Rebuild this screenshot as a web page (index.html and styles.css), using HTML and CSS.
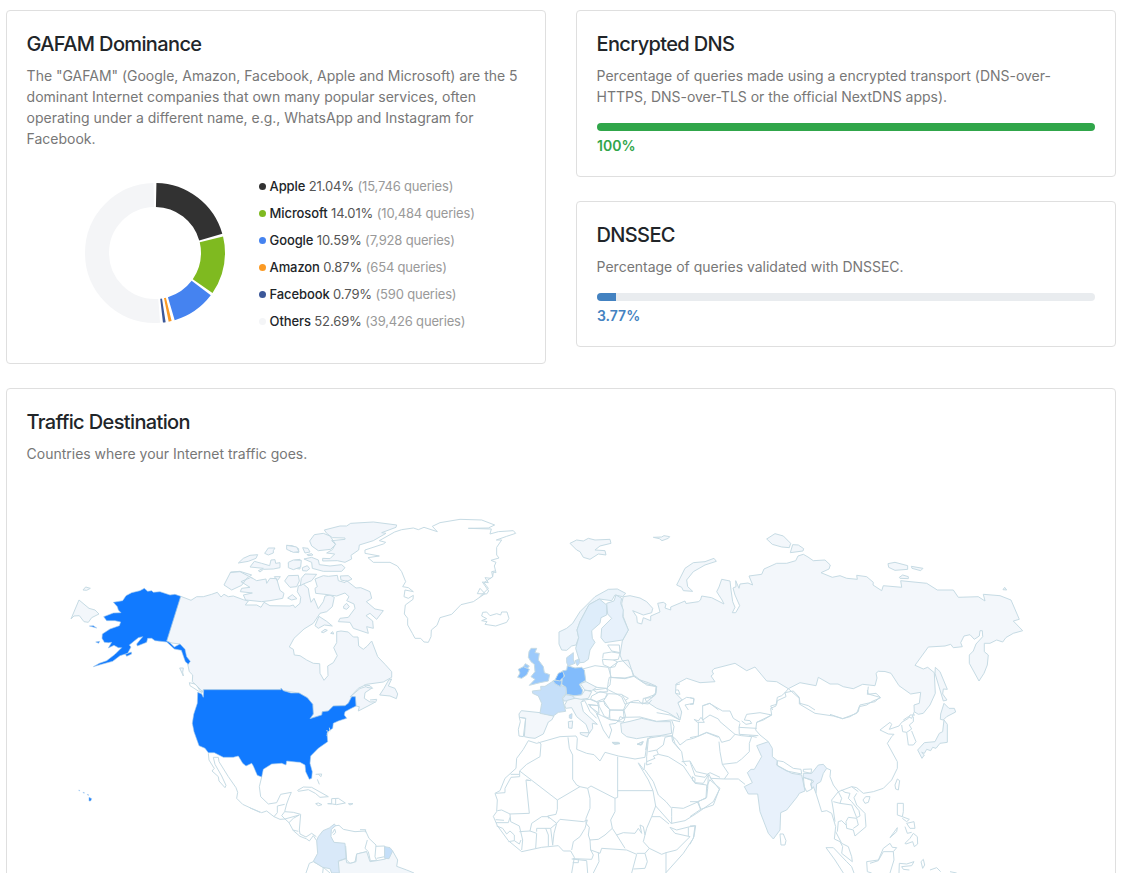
FILE: index.html
```html
<!DOCTYPE html>
<html lang="en">
<head>
<meta charset="utf-8">
<title>Analytics</title>
<link rel="stylesheet" href="styles.css">
</head>
<body>
<main class="page">
<div class="row">
<section class="card gafam">
<h2>GAFAM Dominance</h2>
<p>The "GAFAM" (Google, Amazon, Facebook, Apple and Microsoft) are the 5<br>dominant Internet companies that own many popular services, often<br>operating under a different name, e.g., WhatsApp and Instagram for<br>Facebook.</p>
<div class="chart">
<svg class="donut" width="140" height="140" viewBox="-70 -70 140 140">
<g transform="rotate(-90)">
<circle r="58" pathLength="360" stroke="#323232" stroke-dasharray="72.8 287.2" stroke-dashoffset="-1.2"/>
<circle r="58" pathLength="360" stroke="#7fba20" stroke-dasharray="48.4 311.6" stroke-dashoffset="-76.4"/>
<circle r="58" pathLength="360" stroke="#4583f0" stroke-dasharray="36.4 323.6" stroke-dashoffset="-127.2"/>
<circle r="58" pathLength="360" stroke="#fb9a24" stroke-dasharray="2.5 357.5" stroke-dashoffset="-166.2"/>
<circle r="58" pathLength="360" stroke="#3c5899" stroke-dasharray="2.2 357.8" stroke-dashoffset="-171.2"/>
<circle r="58" pathLength="360" stroke="#f4f5f7" stroke-dasharray="183 177" stroke-dashoffset="-175.8"/>
</g>
</svg>
<ul class="legend">
<li><i class="dot apple"></i><b>Apple</b> 21.04% <span>(15,746 queries)</span></li>
<li><i class="dot microsoft"></i><b>Microsoft</b> 14.01% <span>(10,484 queries)</span></li>
<li><i class="dot google"></i><b>Google</b> 10.59% <span>(7,928 queries)</span></li>
<li><i class="dot amazon"></i><b>Amazon</b> 0.87% <span>(654 queries)</span></li>
<li><i class="dot facebook"></i><b>Facebook</b> 0.79% <span>(590 queries)</span></li>
<li><i class="dot others"></i><b>Others</b> 52.69% <span>(39,426 queries)</span></li>
</ul>
</div>
</section>
<div class="stack">
<section class="card">
<h2>Encrypted DNS</h2>
<p>Percentage of queries made using a encrypted transport (DNS-over-<br>HTTPS, DNS-over-TLS or the official NextDNS apps).</p>
<div class="bar"><div class="fill green" style="width:100%"></div></div>
<div class="value green-text">100%</div>
</section>
<section class="card">
<h2>DNSSEC</h2>
<p>Percentage of queries validated with DNSSEC.</p>
<div class="bar"><div class="fill blue" style="width:3.77%"></div></div>
<div class="value blue-text">3.77%</div>
</section>
</div>
</div>
<section class="card traffic">
<h2>Traffic Destination</h2>
<p>Countries where your Internet traffic goes.</p>
<svg class="map" width="1068" height="393" viewBox="27 480 1068 393">
<!-- Russia, Canada, contiguous United States -->
<path class="ru" d="M623.3 596.7 630 595.7 640 598 646.7 601.7 652.7 608.3 651.7 612.7 643.3 615 632.7 610.7 636.7 616.7 637.3 622.7 641.7 624 643.3 617.7 650.7 620.7 650.7 616 660 612 657.7 603.3 663.3 602.3 666 604 665 608 670.7 610 670.7 607 685 601 686 603.500 698.300 601.700 700.500 600 701.700 596 711.700 597.700 724 604 722 600 716.700 591.700 719 587 721.700 579.300 730 581 731 590 732.700 601.700 735 607.300 732.300 612.700 735.700 612.700 739.700 605.700 735 595 733 588 736 586.700 735.700 580.700 739 588.300 740 584 748 583 752.700 585 749 576 761.700 574.300 764 569 776.700 563.300 786.700 563.300 795.700 560.700 798 556 803.300 554.300 808 557 813.300 560.700 825 560 830.300 565 829 569 821 572.700 832.300 577.300 840 575.700 846.700 578.300 857.300 579.300 856.700 575.300 866.700 576.700 873.300 582.300 873 585 881.700 590.700 883.300 585.700 901.700 587.300 900.700 580.700 926.700 583.300 937.300 590 953.300 590 958.300 597.300 978.300 596.700 985 601 983.300 594.300 1000 595.700 1011 600 1019.300 619.300 1013.300 621 1022.700 630.700 1013.300 633.300 1006 637.500 1002.700 642 996.700 640 990 643.300 984.300 643.300 984.300 651.700 988.300 655 987.300 665 984 673.300 979 681 969.300 663.300 969.300 655 973.300 651 976 644 982.700 636.700 982.300 630.700 980 630.700 979.300 636 974.300 639.300 970 634.700 964 636 960.700 642.700 962.300 646.700 953.300 647.700 950.700 644.300 945 646 928.300 647 915 665.300 923.300 669 927.700 667.300 934.300 672.700 935.300 693.300 930 705 923.300 713.300 918.300 714.300 914.300 711.700 914 705 919.300 703.300 920.700 692.300 910.700 694 899 685.700 891 673.300 885 671.500 878.300 671.300 876 673.300 877 678 875 685.700 862.700 684.300 853.300 688.700 843.300 686.700 838 684 830 684 818.300 677.300 816 685.700 800 682.700 788.300 688.700 776.700 681.700 766.700 681 755 667 746.700 670.700 735 663.300 714 668.700 712 671 713.500 674 711 676 715 681.700 700 682.700 686.700 678.300 676 684 675.500 693 682.300 700 678 703 681.700 712 680 720 668 712.500 656.700 708.300 646.700 701.700 655.300 695 656.700 686.700 643.300 682.700 634.300 676.700 631.700 670 622 660 620 655 622.300 641 628.300 630 623.300 616.700 621.700 603.300Z"/>
<path class="ca" d="M180.700 596.300 191 600.300 196.700 596.700 203.300 596.700 211.700 594.300 217.300 592.300 221 597 224 594.300 228.300 596.700 233.300 596 243.300 599.700 248.300 601 245.300 605 256.700 605 261 607.300 264 602.300 270 605.700 290 606 293.300 605 295 607.700 300 603.300 300.700 597.300 297.300 591.700 298.300 586 303.300 584 308.300 588.300 309.300 595 311 602.300 314 598.300 318.300 608.700 323.300 601.700 325 596 330 595 334.300 597.300 332.300 606.700 326.700 611.700 320 613.300 313.300 623.300 304 629 294 638.300 289.300 647 293.300 649.300 294.300 655 300 655.700 306.700 660 313.300 663.300 319.700 663.700 320 673.300 324 680.300 328 675.700 327.700 666 333.300 662.700 337.300 655.700 333.700 647.700 336.700 642.700 336.700 631.700 341 631 348.300 632 353.300 637 358 637 358.700 646 363.300 649.300 367.300 646 371.700 641 377.700 656.700 385 664.300 391.700 671.700 391.700 677.300 383.300 682 366.700 684.300 358.300 688.300 350 697 360 688.500 368 686 372 688 365 692.700 364.300 698.300 370 702 376 701.700 368 706 358.300 711 359.300 706.700 356 706 355.300 696.700 351.700 696.700 348.300 703.300 345 705.700 333.300 706 328.300 711 322.300 711.700 321.700 715 310 718.700 313.300 714 312.700 704.300 307.300 697.700 299 693 283.300 690.700 281 688.300 281 689.700 203.300 689.700 201.700 693.300 197 686 192.300 681.700 192.700 675 189.300 671.700 187.700 664 184 650 180 644 172 643 166.700 641Z"/>
<path class="us" d="M203.700 689.700 281 689.700 281 688.300 283.300 690.700 291 693 299 693 307.300 697.700 312.700 704.300 313.300 714 310 718.700 321.700 715 322.300 711.700 328.300 711 333.300 706 345 705.700 348.300 703.300 351.700 696.700 355.300 696.700 356 706 350 709 345 711.700 344.300 715 346.700 718.300 338.300 721 333.300 723.300 332.700 728.300 329.300 730.700 327 733 327.700 741.700 318.300 748.300 310.700 756 310 763.300 312.300 771.700 311.700 778.300 309.300 779.300 305.700 771.700 305 765 300 762.300 296 762 286.700 761 286 765 281.700 763.300 271.700 764 263.300 769.300 261.700 777 257.300 775.300 253.300 766 251.700 763.300 246 766 242.700 763.300 238.300 756 233.300 757.300 223.300 757.300 214.300 752.700 208.300 752.700 205 748.300 199 745.700 194 731.700 192.300 723.300 193.700 714.300 197.300 703.300 197.700 692.300 201.700 694 203.300 697.300Z"/>
<!-- Alaska, Chukotka tip, western Arctic islands -->
<g transform="translate(60 500) scale(.33333)">
<path class="us" d="M362 289 345 283 330 285 300 275 280 277 275 272 263 274 253 265 240 272 215 278 198 287 188 302 160 307 172 320 175 330 183 338 160 339 131 350 140 362 165 362 182 366 178 377 150 387 127 402 126 415 133 427 145 428 155 427 145 444 162 436 175 443 185 443 165 463 140 482 118 490 100 500 125 493 158 484 180 467 203 460 213 441 208 435 235 413 248 410 230 432 232 438 260 427 263 415 275 415 285 422 320 426 343 447 364 451 376 485 385 493 391 484 380 470 375 448 360 432 343 441 330 428 320 423ZM196 463 214 456 215 462 200 469ZM88 378 100 377 110 384ZM107 426 119 424 116 430Z"/>
<path class="ru" d="M33 357 57 300 87 325 105 330 117 342 95 353 85 367 72 365 58 347 42 348ZM69 270 77 261 91 265 80 271Z"/>
<path class="ca" d="M535 189 550 175 570 166 593 164 588 175 565 184ZM614 160 625 144 645 144 640 152 640 159 625 165ZM680 136 697 137 716 146 716 158 690 153ZM570 201 583 184 605 190 629 197 633 180 645 179 647 190 660 188 660 203 640 207 610 208 600 216 595 212 610 205ZM685 190 705 180 720 178 720 207 690 203ZM512 216 540 214 575 225 560 235 545 256 515 270 492 255ZM543 245 573 232 590 242 618 237 620 250 630 235 650 236 660 271 672 280 668 295 630 302 605 305 557 300 550 285 577 279 541 275 545 265 570 262ZM643 230 661 230 652 242ZM359 504 370 504 368 517 370 528Z"/>
</g>
<!-- Canadian Arctic Archipelago -->
<g transform="translate(230 510) scale(.33333)">
<path class="ca" d="M283 60 330 48 350 48 362 40 430 36 500 45 498 52 455 68 468 70 430 92 388 105 386 120 363 136 365 147 345 157 322 152 278 153 278 145 300 146 314 132 290 129 307 119 316 103 305 92 345 88 345 84 307 83 290 70ZM239 93 253 74 280 70 300 78 317 103 302 118 265 122 245 108ZM170 106 200 111 207 125 190 127 170 118ZM218 113 234 115 240 126 225 129ZM231 134 245 131 249 135 234 137ZM175 157 190 150 214 151 212 171 190 179 175 173ZM222 147 245 142 265 150 268 164 300 168 335 164 345 173 335 184 280 184 247 175 245 157ZM217 173 232 167 239 176 230 183 218 182ZM164 213 175 197 205 196 208 213 200 230 180 232ZM214 205 225 192 260 193 245 212 220 222 211 227ZM255 207 280 197 295 199 322 196 325 212 345 218 350 212 378 234 392 233 420 245 425 265 409 275 435 297 460 302 440 328 420 310 408 317 428 333 430 355 410 350 415 370 370 355 360 337 325 335 330 325 355 322 375 295 372 282 350 272 357 260 345 249 320 258 285 253 257 250 255 235 262 230ZM331 198 355 197 366 207 352 214 333 210ZM341 288 350 280 358 290 350 298 341 295ZM173 264 187 254 201 266 185 270ZM267 319 290 334 307 348 283 345 265 355 255 347ZM274 366 285 358 292 361 280 368ZM302 370 308 365 311 372ZM0 188 30 185 68 205"/>
</g>
<!-- Greenland, Iceland -->
<g transform="translate(350 510) scale(.33333)">
<path d="M134 66 155 59 190 54 205 59 222 52 262 65 247 49 270 38 330 28 395 30 434 45 415 54 355 55 424 57 420 72 445 65 490 62 497 70 470 79 439 90 455 90 440 112 440 135 447 144 423 151 438 157 433 168 438 188 430 186 428 200 422 205 405 203 415 218 397 216 416 243 410 252 382 251 390 235 405 251 370 275 333 284 305 313 270 323 261 346 244 360 243 380 235 397 222 396 212 385 195 385 187 370 173 345 173 325 163 312 166 285 189 268 190 256 175 265 162 260 165 240 190 245 175 233 158 230 167 215 155 185 142 168 120 157 70 157 54 143 88 138 45 130 45 120 100 102 107 97 88 92 134 66M395 318 398 307 410 306 420 317 440 311 452 315 455 306 471 306 477 325 470 337 437 348 405 343 411 335 395 332 410 326Z"/>
</g>
<!-- Hawaii, Vancouver, Baja California -->
<g transform="translate(60 670) scale(.33333)">
<path class="us" d="M87 382 95 386 92 393 87 393ZM56 361 59 361 58 363ZM69 367 73 368 72 370ZM82 373 86 375 84 376Z"/>
<path d="M388 38 405 42 428 65 418 65 390 47ZM445 250 447 270 460 291 463 295 456 303 475 320 477 333 495 353 498 346 485 318 465 283 460 262 475 262 477 275 505 320 528 353 533 367 530 385 548 403 600 427"/>
</g>
<!-- Atlantic Canada, Central America, northern South America -->
<g transform="translate(250 670) scale(.33333)">
<path class="ca" d="M389 75 402 55 416 30 425 27 415 48 435 55 443 72 439 86 420 78ZM343 45 360 47 368 55 350 52ZM378 95 380 88 360 90"/>
<path d="M35 321 28 350 32 380 55 402 80 398 92 373 124 367 117 383 110 402 104 425 130 427 152 433 148 480 150 492 168 501 185 490 199 500M0 414 35 428 50 423 72 440 90 448 105 447 117 458 130 482 150 499 170 507 178 513 190 497 200 512M72 440 82 428 82 408 104 403M104 425 95 437 105 447 148 435M117 458 130 445 148 435M128 480 145 484M143 361 160 351 185 352 235 380 210 382 196 370 175 359 145 364ZM197 401 205 399 216 404 205 407ZM233 401 245 401 245 386 265 385 286 399 260 404 247 402ZM257 386 257 405M295 401 309 401 300 405ZM197 313 215 312 213 320 205 313M202 328 208 343M229 182 235 184 231 198M238 173 240 184M250 468 267 466 280 478 315 485 347 483 357 505 378 525 375 560 380 572 361 572 355 545 345 535 352 510M247 490 254 477 257 487 250 495M330 479 347 479 346 487M378 529 404 528 404 560 380 565M287 528 290 570 300 580 315 576 320 552 350 545M288 565 265 575M168 609 178 580 190 575 220 592 218 609M220 592 240 609"/>
<path class="co" d="M253 462 257 467 244 478 243 500 252 517 285 520 288 565 265 573 270 609 245 609 240 596 218 592 190 574 203 550 200 512 205 500 219 482 238 474Z"/>
<path class="br" d="M268 609 265 574 288 566 290 578 302 580 318 575 320 552 350 545 360 575 380 572 407 567 428 543 443 570 440 589 470 600 492 609"/>
<path class="gf" d="M404 530 420 533 428 543 417 566 404 565Z"/>
</g>
<!-- Europe -->
<g transform="translate(480 570) scale(.33333)">
<path class="no" d="M237 186 260 175 278 160 300 125 345 80 385 58 412 57 437 70 428 80 405 75 395 92 358 87 327 104 300 155 291 180 296 203 288 225 275 228 260 241 245 240 237 222Z"/>
<path class="se" d="M291 180 300 155 327 104 358 87 380 105 380 135 363 143 360 160 335 182 337 205 345 217 330 240 325 268 312 277 300 278 287 235 296 203Z"/>
<path class="fi" d="M380 100 402 93 408 75 425 85 422 100 430 120 428 140 445 180 428 210 375 218 363 203 365 175 395 145 383 132Z"/>
<path class="gb" d="M147 245 153 235 170 235 165 248 178 250 175 270 190 290 193 308 209 314 205 333 180 338 148 346 165 328 153 320 165 305 163 283 153 275 145 262ZM130 290 136 281 148 288 140 298Z"/>
<path class="ie" d="M115 298 130 290 148 298 140 315 125 325 113 322 120 309Z"/>
<path class="dk" d="M260 263 280 248 280 270 285 280 265 288 260 278ZM285 272 298 267 298 280 292 287Z"/>
<path class="es" d="M117 432 124 422 180 428 222 438 215 450 205 456 190 492 165 505 147 503 133 500 137 445 118 442Z"/>
<path d="M118 442 137 445 130 500 117 498 115 478 121 455ZM305 298 345 287 385 292 393 320 390 345 380 355 350 352 318 340ZM390 293 415 275 445 270 455 300 460 318 435 324 392 322ZM388 322 435 326 465 318 500 345 530 350 527 373 495 385 500 397 487 402 475 391 460 393 435 403 425 380 400 367 382 358 385 335ZM367 268 400 270 412 275 405 290 390 293 370 284ZM383 225 418 225 420 248 395 243ZM368 265 370 250 395 246 420 250 415 268 400 270M335 378 360 365 382 370 375 385 350 395 332 387ZM371 392 385 371 425 373 440 397 430 421 390 420 375 405ZM388 420 432 420 437 440 417 452 390 449ZM355 396 372 393 390 420 387 445 373 439 358 410ZM332 405 355 407 357 430 330 410ZM350 430 365 437 387 448 415 452 408 460 388 463 395 480 387 505 370 480 362 460ZM310 390 330 388 352 397 355 407 325 403 350 430 353 440M340 360 380 355 383 365 350 367ZM303 396 314 392 320 403 330 425 350 445M432 421 450 397 495 400M430 421 432 442 480 441 530 454 575 450M420 440 435 445 430 456 415 455ZM425 374 445 385 435 392M530 428 570 435 600 450M398 518 420 520 405 523ZM472 523 488 515 483 525ZM503 505 545 498 575 498M503 505 497 540M575 450 582 470 577 498 585 520 600 540M577 450 600 455M590 428 598 445M587 345 600 342M587 370 600 373 595 360 587 360M0 80 25 55 12 38 38 20 35 5 45 3"/>
<path class="fr" d="M157 363 183 360 182 349 195 349 220 333 240 345 260 353 258 372 247 382 252 405 257 424 235 427 220 438 180 430 185 400 175 378 158 370ZM268 435 276 431 275 446 268 444Z"/>
<path class="be" d="M219 332 240 327 246 335 241 350 225 341Z"/>
<path class="nl" d="M225 330 235 310 252 302 252 323 243 328 241 333Z"/>
<path class="de" d="M247 303 260 300 262 287 285 294 305 292 313 300 317 331 298 343 308 361 305 375 283 377 260 373 258 352 245 343 247 325 254 318Z"/>
<path class="ch" d="M248 386 258 374 280 378 285 386 265 393 252 393Z"/>
<path class="it" d="M254 405 262 391 292 383 312 388 303 397 310 425 352 463 337 460 338 475 328 490 318 463 290 440 275 413 257 415ZM300 488 328 488 322 501 302 493ZM265 455 278 453 276 475 266 474Z"/>
<path class="at" d="M278 378 305 375 315 360 335 365 325 385 303 388 283 384ZM301 341 318 335 350 352 335 362 315 361Z"/>
<path class="tr" d="M422 460 450 454 485 445 530 455 572 455 575 490 540 497 505 500 470 506 440 500 425 488Z"/>
</g>
<!-- Africa and Arabia -->
<g transform="translate(480 720) scale(.33333)">
<path d="M145 62 130 88 110 115 108 145 75 175 60 212 45 220 52 240 50 275 40 289 52 317 85 362 125 395 185 382 235 377 250 393 272 393 283 412 275 459M145 62 170 70 240 50 288 48 292 55 290 88 320 100 342 104 360 123 375 97 415 108 465 117 495 112 503 58 515 50M119 153 140 133 180 110 183 72 176 66M119 153 119 170 93 172 75 205 75 218 47 220M92 163 118 163M119 153 232 240 300 200 323 205 333 198 405 235 413 232 413 110M413 212 519 212M140 180 152 182 138 180 148 280 90 282 65 270 52 272M90 282 92 305 118 318 128 360 125 390M90 292 85 308 48 308M47 299 72 301M50 318 68 325 80 342 90 333 103 345 103 362 85 365M103 362 118 372 123 360M118 335 150 333 170 340 167 385M150 333 155 310 185 290 205 290 230 310 212 325 170 325 170 335M197 325 205 345 205 378M212 325 218 375M230 310 240 298 310 305 322 300 315 325 300 350 280 365 275 390M218 376 222 340 230 310M232 240 232 268 228 283 203 288 207 296M264 52 268 85 278 105 278 178 290 195 300 200M323 205 330 235 330 265 318 295 318 310 328 322 325 345 330 360 332 390 340 405 335 418 278 416M330 360 355 358 375 345 397 325 392 300 405 275 405 235M332 390 360 400 365 385 440 390 470 403 455 459M397 325 410 345 435 385M410 345 430 338 465 340 475 325 485 340 480 315 490 320 495 345 490 365 508 385M519 212 527 258 515 290 500 325 495 345M515 290 540 290 567 312M527 258 575 312M475 130 490 155 505 180 519 212M495 128 492 150 475 128M495 150 520 185 535 225 558 245 575 265 575 290 575 310M575 310 615 302 650 280 700 245 720 205M508 385 545 403 558 398 590 390 630 350 585 340 570 322M570 322 590 330 630 320 645 318 640 355 610 400 558 458M558 398 558 459M508 385 495 400 470 400M495 400 502 425 495 445 460 447M275 417 320 422 323 459M295 417 295 428 278 428M355 398 357 425 340 459M625 322 625 348M535 103 565 110 610 138 645 190 680 195 683 205 680 232 655 245 610 265 575 262M655 245 662 268M500 125 525 115 520 108 535 103 530 90 550 75 555 52M505 95 530 90M505 58 500 110 500 135 515 130M575 47 578 65 605 95 610 125 620 138M605 125 630 123 648 155 683 163 690 158 720 172M637 170 645 175 645 185 638 182ZM645 188 670 190 685 165 683 205M720 205 690 180M396 67 415 67 420 71 402 72ZM472 72 490 65 485 75ZM575 47 590 60 600 75 620 60 640 55 680 38 715 52M555 52 575 47"/>
</g>
<!-- Arctic islands, Central Asia -->
<g transform="translate(640 520) scale(.33333)">
<path class="ru" d="M40 52 65 51 72 47 89 50 85 55 66 62 58 56ZM380 57 405 41 430 48 452 70 448 83 425 81 397 73ZM458 74 475 75 491 86 489 93 451 98ZM110 195 125 165 135 145 160 128 195 125 222 115 229 124 195 135 160 155 140 180 143 200 158 214 130 212 125 202Z"/>
<path d="M0 480 25 488 48 498 47 518 35 533 10 535 8 550 25 552 35 540M113 548 140 532 162 535 160 550 135 555 145 570M187 558 210 550 235 570M445 506 435 518 438 530 412 542 410 553 392 558 398 570M445 506 478 535 480 550 505 557 525 570"/>
</g>
<g transform="translate(570 530) scale(.33333)">
<path class="ru" d="M0 40 20 30 40 33 55 25 75 30 120 28 123 40 90 48 75 60 105 62 108 75 85 72 60 88 40 82 30 65 20 60Z"/>
</g>
<!-- Far East -->
<g transform="translate(830 540) scale(.33333)">
<path class="ru" d="M174 71 195 67 233 77 233 88 195 91 176 82ZM244 79 279 85 272 92 246 85ZM208 112 218 105 235 110 235 116 210 115ZM519 149 524 142 530 150ZM316 382 330 395 352 448 340 447 338 462 351 480 340 483 327 440 315 400Z"/>
<path class="jp" d="M342 490 357 505 373 505 377 516 350 530 340 540 331 538 332 522Z"/>
<path d="M115 440 112 463 138 460 152 473 125 485 110 495 88 500 85 515 60 530 38 536 0 523M253 515 245 535 235 530 220 540"/>
</g>
<!-- South and East Asia -->
<g transform="translate(690 690) scale(.33333)">
<path class="in" d="M200 167 235 155 247 175 247 200 262 212 260 225 305 250 335 255 337 264 345 303 328 310 322 320 290 360 272 368 270 420 250 447 235 430 210 365 203 312 175 312 163 290 187 278 172 248 183 238 193 238 215 200ZM340 250 365 250 385 225 400 223 410 235 400 250 392 275 380 282 378 310 370 290 366 296 363 282 372 274 340 262Z"/>
<path class="jp" d="M762 90 772 103 772 157 750 160 738 175 728 172 722 182 710 178 703 190 695 187 703 195 696 205 683 180 703 158 735 155 748 130 758 125Z"/>
<path d="M262 212 280 215 310 235 333 238 335 252 290 243 262 227ZM340 238 365 237 363 250 340 245ZM340 262 367 270 362 282 366 297 350 305 343 290ZM235 155 210 135 197 120 200 97 245 75 242 55 258 48 262 22 275 17 285 8 310 3 328 22 328 42 375 70 430 78 458 86 500 70 510 45 555 35 570 22 535 12 532 0M200 97 220 90 245 75 210 68 170 73 163 90 180 92 185 100 168 103 155 93M150 100 147 112 200 115M147 112 148 133 205 137M38 90 38 47 58 40 98 63 120 63 130 85 150 97M38 90 60 75 85 87 90 95 135 133M12 88 25 93 33 82 43 97 22 97 12 88M0 23 12 27 10 43 0 43M25 97 25 138 0 143M25 138 50 127 87 140 95 157 120 150 135 133 155 137 185 140 178 160 178 185 155 207 140 218 97 223 90 185 87 155M178 137 200 142M97 223 115 250 103 267 63 265 55 250 45 262 15 257 0 215M103 267 145 267 165 283M410 235 422 240 420 260 430 285 445 305 485 290 500 293 520 310 550 305 580 295 605 270 622 235 622 215 592 160 605 140 612 133 595 132 570 120 600 97 605 103 598 118 627 108 635 97 655 85 660 75 675 75M635 105 638 125 650 127 665 117 658 105 670 95 670 80M650 127 655 165 670 165 678 155 665 123M615 285 622 267 629 272 625 300 617 297ZM519 330 527 320 540 320 535 337 525 340ZM500 310 492 323 500 345 525 370 528 410 495 438 490 420 470 415 468 395 475 382 500 385 505 405 490 415M485 290 505 305M445 305 455 325 450 340 485 345 500 383 510 378 507 362 485 335 475 325 480 310 465 307 455 300M378 310 395 365 410 362 425 370 437 410 433 447 450 455 458 470 455 490 487 515 485 500 475 470 455 460 437 425M445 305 425 330 430 360 435 395M450 340 430 335M468 405 455 392 445 395 442 425M270 432 280 432 288 452 285 465 273 465ZM408 473 430 473 470 515 485 530 492 549M408 473 435 510 460 549M530 515 532 545 545 549M530 515 565 510 580 475 600 460 607 472 620 473 610 485 580 485 565 512 540 520M610 485 612 510 600 549M622 340 640 340 640 365 637 380 622 375ZM637 380 658 388 650 395 637 385M650 400 672 395 675 415 660 415ZM645 410 652 430 665 427M645 460 660 445 670 430 682 440 683 462 673 470 668 455 648 462ZM600 443 622 413 620 425ZM627 549 628 520 650 522 672 515 665 527 635 530 640 538 658 540M693 515 700 508 704 525 698 535ZM720 540 740 533 752 545M780 545 800 549M0 408 17 407 12 440 0 463M0 335 22 335 32 358 70 345 88 298 60 262M22 335 48 325 50 290 60 268M0 380 32 358"/>
</g>
</svg>
</section>
</main>
</body>
</html>
```
FILE: styles.css
```css
* { box-sizing: border-box; }
body {
  margin: 0;
  background: #fff;
  color: #212529;
  font-family: Inter, "Liberation Sans", sans-serif;
  overflow: hidden;
}
.page { width: 1116px; padding: 10px 0 0 6px; }
.row { display: grid; grid-template-columns: 540px 540px; gap: 30px; align-items: start; }
.stack { display: grid; gap: 24px; }
.card {
  border: 1px solid #dfdfdf;
  border-radius: 4px;
  padding: 21px 20px 20px;
  background: #fff;
}
h2 { margin: 0 0 9px -.5px; font-size: 20px; line-height: 24px; font-weight: 500; letter-spacing: -.63px; }
p { margin: 0 0 0 -.4px; font-size: 14px; line-height: 21px; letter-spacing: -.012px; color: #777; white-space: nowrap; }
.gafam { height: 354px; }
.stack .card + .card { padding-bottom: 20px; }
.chart { display: flex; align-items: center; padding: 24px 0 0 58px; }
.donut { flex: none; margin-bottom: 2px; }
.donut circle { fill: none; stroke-width: 24; }
.legend { list-style: none; margin: 0 0 0 34px; padding: 0; font-size: 13px; line-height: 27px; letter-spacing: -.12px; color: #555; }
.legend li { white-space: nowrap; }
.legend b { font-weight: 500; color: #212529; }
.legend span { color: #999; letter-spacing: -.18px; }
.dot { display: inline-block; width: 7px; height: 7px; border-radius: 50%; margin-right: 3.6px; vertical-align: 1px; }
.apple { background: #323232; }
.microsoft { background: #7fba20; }
.google { background: #4583f0; }
.amazon { background: #fb9a24; }
.facebook { background: #3c5899; }
.others { background: #f4f5f7; }
.bar { height: 8px; margin: 16px 0 4px; border-radius: 4px; background: #e9ecef; overflow: hidden; }
.fill { height: 100%; }
.green { background: #30a64a; }
.blue { background: #4382c1; }
.value { font-size: 14px; line-height: 21px; font-weight: 600; }
.green-text { color: #30a64a; }
.blue-text { color: #4382c1; }
.traffic { margin-top: 24px; width: 1110px; }
.map { display: block; margin-top: 16px; }
.map path {
  fill: none;
  stroke: #c6dbe4;
  stroke-width: 1;
  stroke-linejoin: round;
  vector-effect: non-scaling-stroke;
}
.map .us { fill: #117aff; stroke: #a3c9ec; stroke-width: .6; }
.map .ca { fill: #f2f6fb; }
.map .ru, .map .es, .map .it, .map .at, .map .tr, .map .br { fill: #f3f7fb; }
.map .co { fill: #d9e9f9; }
.map .gf, .map .fr { fill: #c5dff9; }
.map .no { fill: #ecf4fb; }
.map .se { fill: #deedfa; }
.map .fi { fill: #e7f1fb; }
.map .gb { fill: #9ccafb; }
.map .ie, .map .be { fill: #83bcfc; }
.map .nl { fill: #59a4fd; }
.map .de { fill: #82bcfc; }
.map .dk { fill: #bedcfb; }
.map .ch { fill: #deecfa; }
.map .in { fill: #e8f1fb; }
.map .jp { fill: #f0f6fb; }
```
